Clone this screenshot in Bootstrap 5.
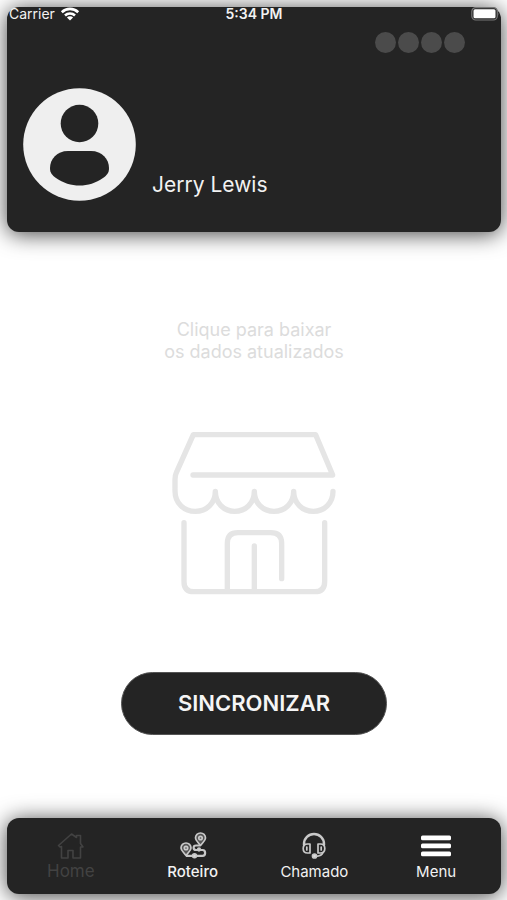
<!DOCTYPE html>
<html lang="pt-BR">
<head>
<meta charset="utf-8">
<meta name="viewport" content="width=device-width, initial-scale=1">
<title>Sincronizar</title>
<link href="https://cdn.jsdelivr.net/npm/bootstrap@5.3.0/dist/css/bootstrap.min.css" rel="stylesheet">
<style>
  body { font-family: Inter, "Liberation Sans", sans-serif; background: #fff; padding: 7px 6px 6px 7px; }
  .panel { background: #242424; color: #f2f2f2; border-radius: 12px; box-shadow: 0 2px 22px rgba(0, 0, 0, .75); }
  .status { font-size: 14px; line-height: 14px; padding: 0 2px; }
  .status .clock { font-weight: 600; }
  .dots { gap: 2px; padding: 11px 36px 0 0; }
  .dot { width: 21px; height: 21px; background: #4b4b4b; }
  .profile { gap: 16px; padding: 35px 16px 31px; }
  .user-name { font-size: 21px; line-height: 26px; padding-bottom: 3px; }
  .hint { font-size: 18px; line-height: 22px; color: #dcdcdc; }
  .hint-block { padding-top: 87px; }
  .store { margin-top: 57px; }
  .sync { width: 266px; height: 63px; margin-top: 62px; background: #242424; border: 1px solid #555; color: #f5f5f5; font-size: 22px; font-weight: 600; }
  .sync:hover { background: #333; color: #fff; }
  .tabs { padding: 14px 4px 12px 3px; }
  .tab { color: #f2f2f2; font-size: 15px; line-height: 20px; }
  .tab svg { margin-bottom: 2px; }
  .tab.current { color: #424242; font-size: 17px; line-height: 18px; }
</style>
</head>
<body class="d-flex flex-column min-vh-100">
  <header class="panel">
    <div class="status row g-0 align-items-center">
      <div class="col d-flex align-items-center gap-1">
        <span>Carrier</span>
        <svg width="22" height="14" viewBox="0 0 20 14" fill="none" stroke="#fff" stroke-width="2.6" aria-hidden="true">
          <path d="M1.8 5.2a11.8 11.8 0 0 1 16.4 0M5 8.5a7.2 7.2 0 0 1 10 0"/>
          <path d="M10 13.6L6.900 10.500a4.400 4.400 0 0 1 6.200 0z" fill="#fff" stroke="none"/>
        </svg>
      </div>
      <div class="col-auto clock">5:34 PM</div>
      <div class="col d-flex justify-content-end">
        <svg width="28" height="14" viewBox="0 0 28 14" aria-hidden="true">
          <rect x="0.800" y="0.600" width="25.500" height="12.400" rx="4" fill="#242424" stroke="#777" stroke-width="1.200"/>
          <rect x="2.500" y="2.300" width="22" height="9" rx="1.500" fill="#fff"/>
          <path d="M27 5.200q1 1.800 0 3.600z" fill="#777"/>
        </svg>
      </div>
    </div>
    <div class="dots d-flex justify-content-end" aria-hidden="true">
      <span class="dot rounded-circle"></span><span class="dot rounded-circle"></span><span class="dot rounded-circle"></span><span class="dot rounded-circle"></span>
    </div>
    <div class="profile d-flex align-items-end">
      <svg width="113" height="113" viewBox="0 0 113 113" aria-hidden="true">
        <circle cx="56.500" cy="56.500" r="56.300" fill="#efefef"/>
        <circle cx="56.500" cy="35.500" r="18.800" fill="#242424"/>
        <path d="M45 63H68C79 63 86 71 86 80C86 85 84 87 80 90C66 100 47 100 33 90C29 87 27 85 27 80C27 71 34 63 45 63Z" fill="#242424"/>
      </svg>
      <div class="user-name">Jerry Lewis</div>
    </div>
  </header>

  <main class="flex-grow-1 d-flex flex-column align-items-center text-center">
    <div class="hint-block"><p class="hint mb-0">Clique para baixar<br>os dados atualizados</p></div>
    <svg class="store" width="190" height="190" viewBox="-4 -1 570 570" fill="none" stroke="#e5e5e5" stroke-width="16" stroke-linecap="round" stroke-linejoin="round" aria-hidden="true">
      <path d="M98 164H517L466 43H99L48 157Q44 165 44 178V211C44 250 72 273 105 273C140 273 165 248 165 213C165 248 190 273 223 273C257 273 282 248 282 213C282 248 307 273 341 273C375 273 400 248 400 213C400 248 425 273 459 273C493 273 518 248 518 213"/>
      <path d="M71 307V484Q71 514 101 514H463Q493 514 493 484V307"/>
      <path d="M201 510V369Q201 337 233 337H331Q364 337 364 369V475M282 377V510"/>
    </svg>
    <button type="button" class="sync btn rounded-pill">SINCRONIZAR</button>
  </main>

  <nav class="panel tabs row g-0 text-center" aria-label="Principal">
    <a href="#home" class="tab current col d-flex flex-column align-items-center text-decoration-none" aria-current="page">
      <svg width="28" height="28" viewBox="0 0 28 28" fill="none" stroke="#424242" stroke-width="1.600" stroke-linejoin="round" aria-hidden="true">
        <path d="M4.500 14.500V26H11V18.500H16V26H23.500V15H26L23.500 11.500V3.500H19.500V5.500L14.500 2L1.500 13.500L3 15Z"/>
      </svg>
      <span>Home</span>
    </a>
    <a href="#roteiro" class="tab col d-flex flex-column align-items-center text-decoration-none">
      <svg width="28" height="28" viewBox="0 0 28 28" fill="none" stroke="#c9c9c9" stroke-width="1.700" stroke-linejoin="round" aria-hidden="true">
        <path d="M21.500 13.500C19 10 16.500 8.500 16.500 6A5 5 0 0 1 26.500 6C26.500 8.500 24 10 21.500 13.500Z" fill="#555"/>
        <path d="M7 23.500C4.500 20 2 18.500 2 16A5 5 0 0 1 12 16C12 18.500 9.500 20 7 23.500Z" fill="#555"/>
        <circle cx="21.500" cy="6" r="1.700"/><circle cx="7" cy="16" r="1.700"/>
        <path d="M21 13.500H17C13.800 13.500 13.800 18 17 18H23.500C27 18 27 23.800 23.500 23.800H7" stroke-width="2.200"/>
        <circle cx="15.500" cy="23.800" r="1.900" fill="#ddd"/><circle cx="20" cy="17.500" r="1.300" fill="#ddd"/>
      </svg>
      <span class="fw-medium">Roteiro</span>
    </a>
    <a href="#chamado" class="tab col d-flex flex-column align-items-center text-decoration-none">
      <svg width="28" height="28" viewBox="0 0 28 28" fill="none" stroke="#c9c9c9" stroke-width="1.700" stroke-linecap="round" stroke-linejoin="round" aria-hidden="true">
        <path d="M4 13V12A10 10 0 0 1 24 12V13" stroke-width="2.400"/>
        <path d="M10 12H7.500Q3.200 12 3.200 16.500Q3.200 21 7.500 21H10ZM18 12H20.500Q24.800 12 24.800 16.500Q24.800 21 20.500 21H18Z"/>
        <path d="M6.800 15V18M21.200 15V18M23 20.500Q22 24 15.500 24.300"/>
        <circle cx="14.500" cy="24" r="2" fill="#ddd"/>
      </svg>
      <span>Chamado</span>
    </a>
    <a href="#menu" class="tab col d-flex flex-column align-items-center text-decoration-none">
      <svg width="30" height="28" viewBox="0 0 30 28" fill="#fff" aria-hidden="true">
        <rect y="3.500" width="30" height="4.700" rx="1.500"/><rect y="11.500" width="30" height="4.700" rx="1.500"/><rect y="19.500" width="30" height="4.700" rx="1.500"/>
      </svg>
      <span>Menu</span>
    </a>
  </nav>
<script src="https://cdn.jsdelivr.net/npm/bootstrap@5.3.0/dist/js/bootstrap.bundle.min.js"></script>
</body>
</html>
